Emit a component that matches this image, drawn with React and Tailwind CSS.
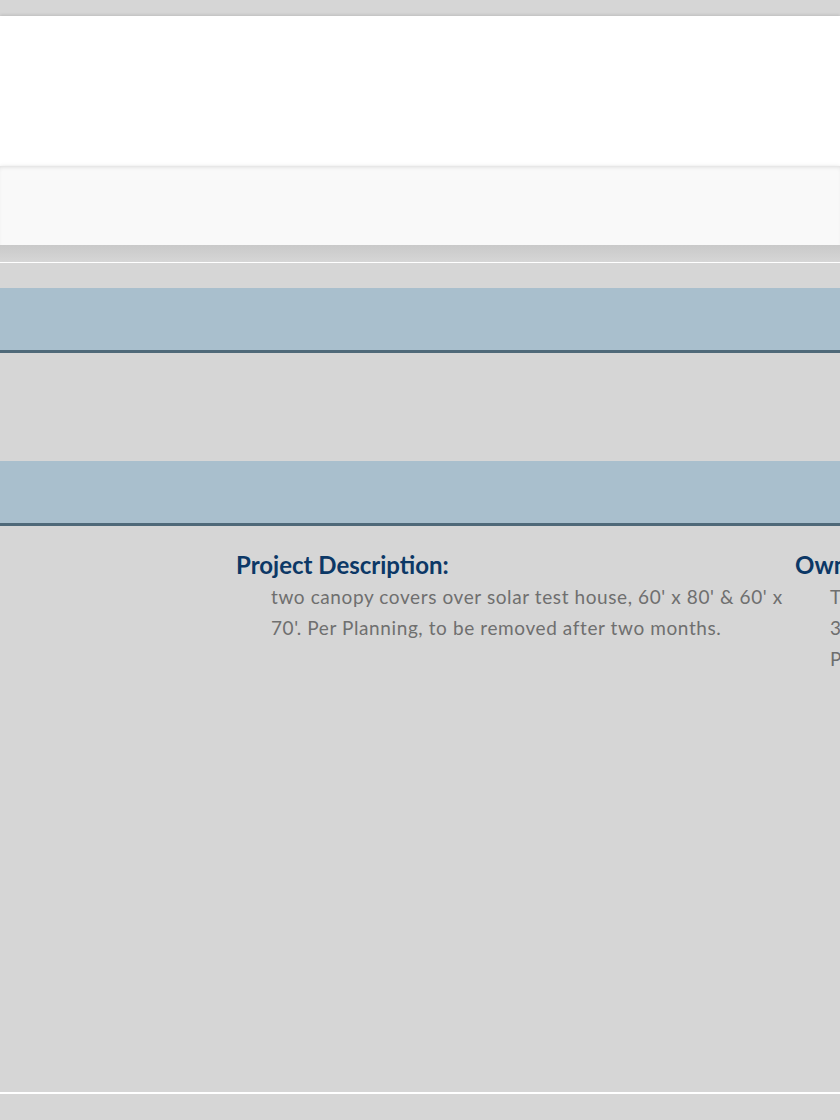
import React from 'react';

const Column = ({ title, lines, width }) => (
    <div className={`shrink-0 ${width}`}>
        <h3 className="text-[24px] leading-[28px] font-bold text-[#0c3866]">{title}</h3>
        <p className="mt-[2px] pl-[35px] pr-[10px] text-[19px] leading-[31px] tracking-[0.6px] text-[#6f6f6f]">
            {lines}
        </p>
    </div>
);

const SectionBar = () => (
    <div className="h-[65px] bg-[#a9bfcd] border-b-[3px] border-[#4f6979]"></div>
);

export default function App() {
    return (
        <div className="w-[840px] h-[1120px] overflow-hidden bg-[#d6d6d6] font-['Lato','Open_Sans',sans-serif]">
            {/* Header blocks */}
            <div className="h-[16px]"></div>
            <div className="h-[150px] bg-white shadow-[0_-1px_3px_rgba(0,0,0,0.12)]"></div>
            <div className="h-[79px] bg-[#f9f9f9] shadow-[inset_0_3px_4px_-2px_rgba(0,0,0,0.12),0_2px_5px_rgba(0,0,0,0.25)]"></div>
            <div className="h-[17px] bg-gradient-to-b from-[#c9c9c9] to-[#d6d6d6]"></div>
            <div className="h-px bg-white"></div>
            <div className="h-[25px]"></div>

            {/* Section bars */}
            <SectionBar />
            <div className="h-[108px]"></div>
            <SectionBar />

            {/* Details */}
            <div className="flex pl-[236px] pt-[25px] h-[566px]">
                <Column
                    width="w-[559px]"
                    title="Project Description:"
                    lines="two canopy covers over solar test house, 60' x 80' & 60' x 70'. Per Planning, to be removed after two months."
                />
                <Column
                    width="w-[300px]"
                    title="Owner:"
                    lines={<>T<br />3<br />P</>}
                />
            </div>
            <div className="h-[2px] bg-white"></div>
        </div>
    );
}
